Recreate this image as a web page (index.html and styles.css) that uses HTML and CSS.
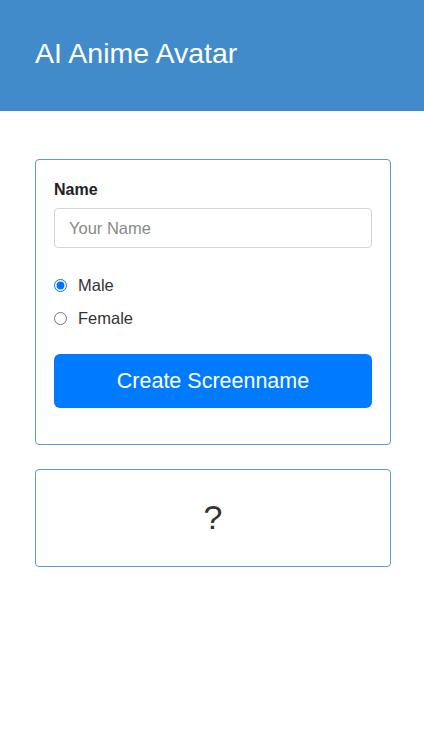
FILE: index.html
```html
<!DOCTYPE html>
<html lang="en">
<head>
<meta charset="utf-8">
<title>AI Anime Avatar</title>
<link rel="stylesheet" href="styles.css">
</head>
<body>
<header class="topbar">
  <h1 class="title">AI Anime Avatar</h1>
</header>
<main class="content">
  <form class="card form-card">
    <label class="field-label" for="name">Name</label>
    <input class="text-input" id="name" type="text" placeholder="Your Name">
    <div class="radios">
      <label class="radio-row"><input type="radio" name="gender" checked> Male</label>
      <label class="radio-row"><input type="radio" name="gender"> Female</label>
    </div>
    <button type="button" class="primary-btn">Create Screenname</button>
  </form>
  <section class="card result-card">
    <span class="result">?</span>
  </section>
</main>
</body>
</html>
```
FILE: styles.css
```css
* { box-sizing: border-box; }
html, body { margin: 0; padding: 0; background: #fff; }
body {
  font-family: "Liberation Sans", Arial, sans-serif;
  color: #333;
}
.topbar {
  background: #428bca;
  height: 111px;
  padding: 37px 35px 0;
  display: flex;
  align-items: flex-start;
}
.title {
  margin: 0;
  color: #fff;
  font-size: 28.5px;
  line-height: 32px;
  font-weight: normal;
}
.content {
  padding: 48px 33px 0 35px;
  display: flex;
  flex-direction: column;
  gap: 24px;
}
.card {
  border: 1px solid #5b9bd5;
  border-radius: 4px;
  background: #fff;
}
.form-card {
  padding: 18px 18px 36px;
  display: flex;
  flex-direction: column;
  margin: 0;
}
.field-label {
  font-weight: bold;
  font-size: 16px;
  color: #222;
  line-height: 20px;
  margin-top: 2px;
  margin-bottom: 8px;
}
.text-input {
  height: 40px;
  border: 1px solid #d4d4d4;
  border-radius: 4px;
  padding: 0 14px;
  font-size: 16.5px;
  font-family: inherit;
  color: #333;
}
.text-input::placeholder { color: #8a8a8a; }
.radios {
  display: flex;
  flex-direction: column;
  gap: 13px;
  margin-top: 27px;
}
.radio-row {
  display: flex;
  align-items: center;
  gap: 11px;
  font-size: 16.5px;
  line-height: 20px;
  color: #333;
}
.radio-row input {
  margin: 0;
  width: 13px;
  height: 13px;
  accent-color: #0075ff;
}
.primary-btn {
  margin-top: 26px;
  height: 54px;
  border: none;
  border-radius: 6px;
  background: #007bff;
  color: #fff;
  font-size: 21.5px;
  font-family: inherit;
}
.result-card {
  height: 98px;
  display: flex;
  align-items: center;
  justify-content: center;
}
.result {
  font-size: 34px;
  line-height: 38px;
  color: #333;
  margin-top: -2px;
}
```
